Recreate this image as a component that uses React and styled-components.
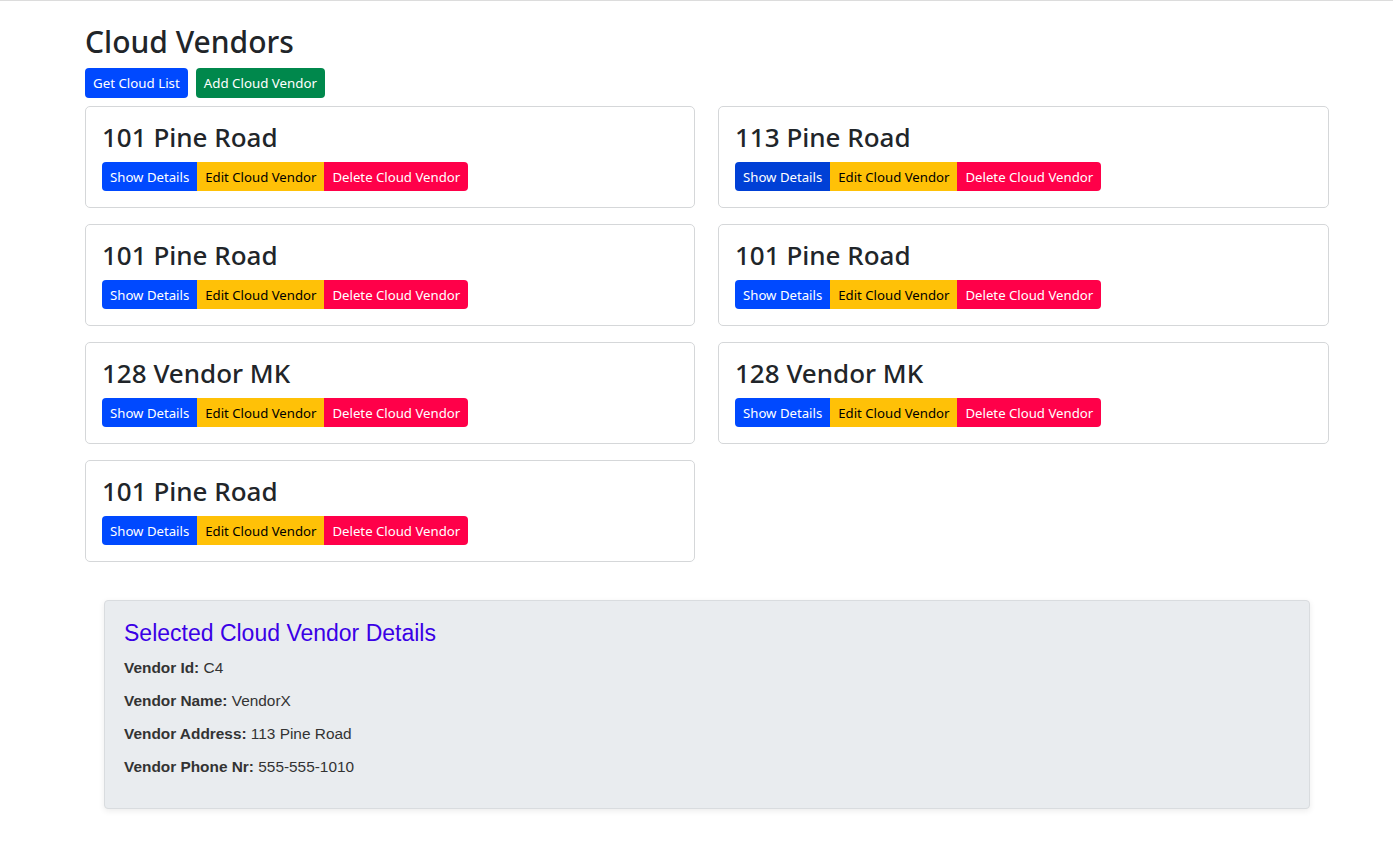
import React from 'react';
import styled, { createGlobalStyle } from 'styled-components';

const GlobalStyle = createGlobalStyle`
  body {
    margin: 0;
    background: #fff;
    font-family: "Noto Sans", "Open Sans", sans-serif;
    color: #212529;
    border-top: 1px solid #dcdcdc;
  }
`;

const vendors = [
  { id: 1, name: '101 Pine Road' },
  { id: 2, name: '113 Pine Road', selected: true },
  { id: 3, name: '101 Pine Road' },
  { id: 4, name: '101 Pine Road' },
  { id: 5, name: '128 Vendor MK' },
  { id: 6, name: '128 Vendor MK' },
  { id: 7, name: '101 Pine Road' },
];

function App() {
  return (
    <>
      <GlobalStyle />
      <Page>
        <Title>Cloud Vendors</Title>
        <Toolbar>
          <Button $variant="primary">Get Cloud List</Button>
          <Button $variant="success">Add Cloud Vendor</Button>
        </Toolbar>
        <Grid>
          {vendors.map(v => (
            <Card key={v.id}>
              <CardTitle>{v.name}</CardTitle>
              <Group>
                <GroupButton $variant={v.selected ? 'active' : 'primary'}>Show Details</GroupButton>
                <GroupButton $variant="warning">Edit Cloud Vendor</GroupButton>
                <GroupButton $variant="danger">Delete Cloud Vendor</GroupButton>
              </Group>
            </Card>
          ))}
        </Grid>
        <Details>
          <DetailsTitle>Selected Cloud Vendor Details</DetailsTitle>
          <Field><b>Vendor Id:</b> C4</Field>
          <Field><b>Vendor Name:</b> VendorX</Field>
          <Field><b>Vendor Address:</b> 113 Pine Road</Field>
          <Field><b>Vendor Phone Nr:</b> 555-555-1010</Field>
        </Details>
      </Page>
    </>
  );
}

export default App;

const colors = {
  primary: { bg: '#0049ff', fg: '#fff' },
  active: { bg: '#0040d6', fg: '#fff' },
  success: { bg: '#00884c', fg: '#fff' },
  warning: { bg: '#ffc107', fg: '#000' },
  danger: { bg: '#ff0049', fg: '#fff' },
};

const Page = styled.div`
  width: 1244px;
  margin-left: 85px;
  padding-top: 23px;
  padding-bottom: 36px;
`;

const Title = styled.h1`
  margin: 0 0 8px;
  font-size: 30px;
  font-weight: 500;
  line-height: 36px;
`;

const Toolbar = styled.div`
  display: flex;
  gap: 8px;
  margin-bottom: 8px;
`;

const Button = styled.button`
  height: 30px;
  padding: 0 8px;
  border: none;
  border-radius: 4px;
  font-family: inherit;
  font-size: 13.3px;
  background: ${p => colors[p.$variant].bg};
  color: ${p => colors[p.$variant].fg};
`;

const Grid = styled.div`
  display: grid;
  grid-template-columns: 610px 611px;
  column-gap: 23px;
  row-gap: 16px;
  align-items: start;
`;

const Card = styled.div`
  height: 102px;
  box-sizing: border-box;
  border: 1px solid #d5d7d9;
  border-radius: 5px;
  padding: 13px 16px 15px;
`;

const CardTitle = styled.h2`
  margin: 0 0 8px;
  font-size: 26px;
  font-weight: 500;
  line-height: 34px;
`;

const Group = styled.div`
  display: inline-flex;
`;

const GroupButton = styled(Button)`
  height: 29px;
  font-size: 13.2px;
  border-radius: 0;
  &:first-child { border-radius: 4px 0 0 4px; }
  &:last-child { border-radius: 0 4px 4px 0; }
`;

const Details = styled.div`
  margin: 38px 19px 0;
  background: #e9ecef;
  border: 1px solid #d9dcdf;
  border-radius: 4px;
  box-shadow: 0 2px 6px rgba(0, 0, 0, 0.08);
  padding: 18px 20px 25px 19px;
  font-family: "Liberation Sans", Arial, sans-serif;
  color: #333;
`;

const DetailsTitle = styled.h3`
  margin: 0 0 4px;
  font-size: 23px;
  font-weight: 400;
  color: #3a00e6;
  line-height: 28px;
`;

const Field = styled.p`
  margin: 0;
  font-size: 15.4px;
  line-height: 33px;
`;
